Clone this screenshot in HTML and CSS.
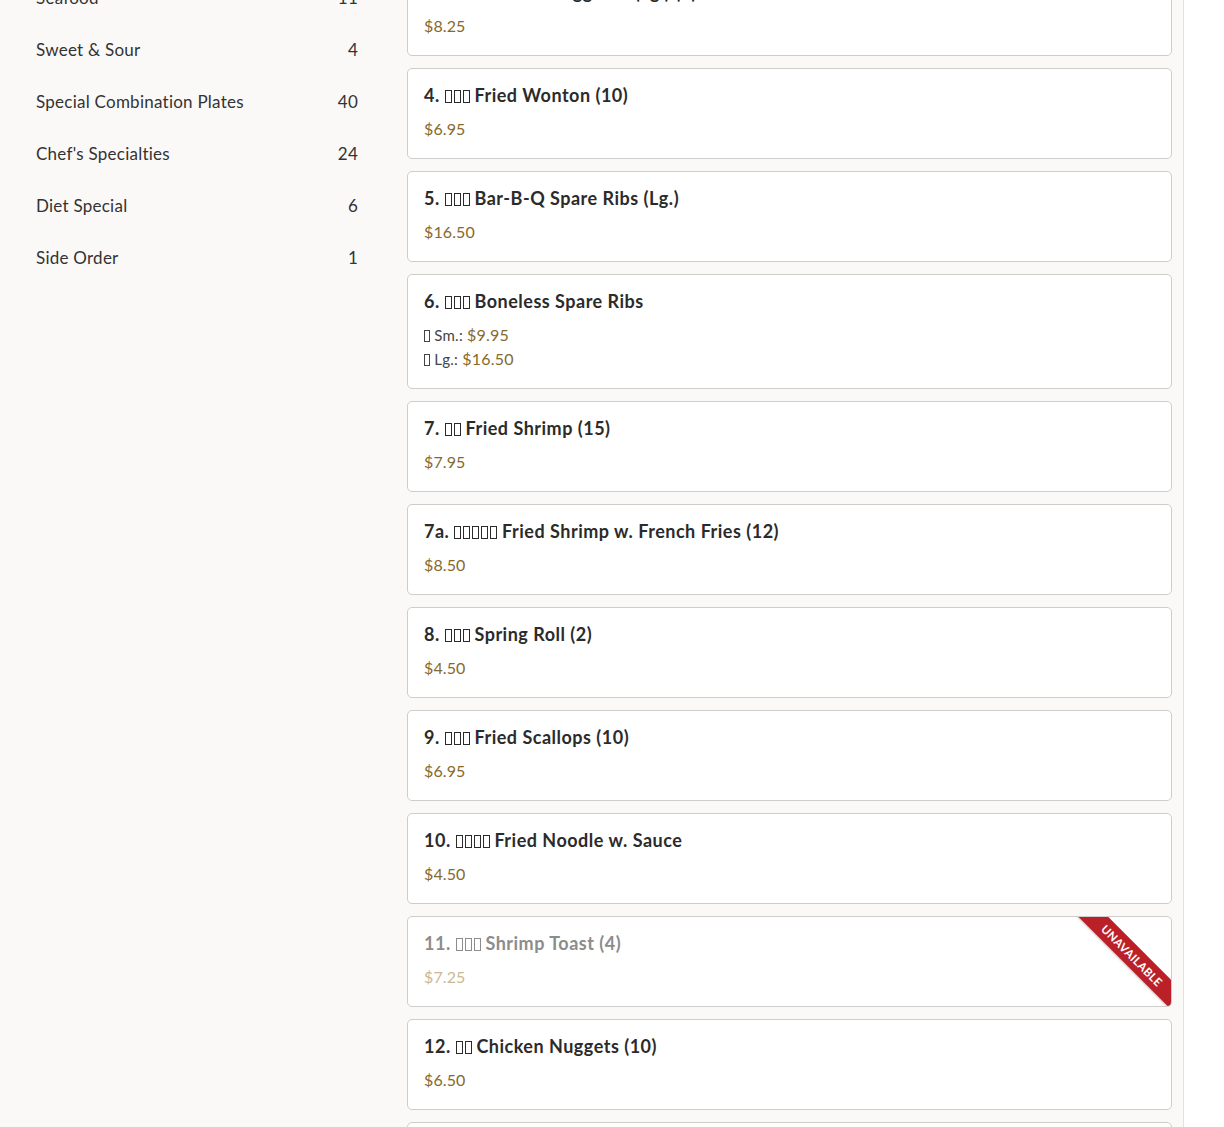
FILE: index.html
```html
<!DOCTYPE html>
<html lang="en">
<head>
<meta charset="utf-8">
<title>Menu</title>
<link rel="stylesheet" href="styles.css">
</head>
<body>
<div class="page">
  <aside class="sidebar">
    <ul class="cats">
      <li class="cat"><span>Seafood</span><span>11</span></li>
      <li class="cat"><span>Sweet &amp; Sour</span><span>4</span></li>
      <li class="cat"><span>Special Combination Plates</span><span>40</span></li>
      <li class="cat"><span>Chef's Specialties</span><span>24</span></li>
      <li class="cat"><span>Diet Special</span><span>6</span></li>
      <li class="cat"><span>Side Order</span><span>1</span></li>
    </ul>
  </aside>
  <main class="items">
    <div class="card">
      <div class="title">3. <span class="tofu"></span><span class="tofu"></span> Roast Pork Egg Roll (Lg.) (1)</div>
      <div class="price">$8.25</div>
    </div>
    <div class="card">
      <div class="title">4. <span class="tofu"></span><span class="tofu"></span><span class="tofu"></span> Fried Wonton (10)</div>
      <div class="price">$6.95</div>
    </div>
    <div class="card">
      <div class="title">5. <span class="tofu"></span><span class="tofu"></span><span class="tofu"></span> Bar-B-Q Spare Ribs (Lg.)</div>
      <div class="price">$16.50</div>
    </div>
    <div class="card">
      <div class="title">6. <span class="tofu"></span><span class="tofu"></span><span class="tofu"></span> Boneless Spare Ribs</div>
      <div class="opt"><span class="tofu small"></span> <span class="lbl">Sm.:</span> <span class="amt">$9.95</span></div>
      <div class="opt"><span class="tofu small"></span> <span class="lbl">Lg.:</span> <span class="amt">$16.50</span></div>
    </div>
    <div class="card">
      <div class="title">7. <span class="tofu"></span><span class="tofu"></span> Fried Shrimp (15)</div>
      <div class="price">$7.95</div>
    </div>
    <div class="card">
      <div class="title">7a. <span class="tofu"></span><span class="tofu"></span><span class="tofu"></span><span class="tofu"></span><span class="tofu"></span> Fried Shrimp w. French Fries (12)</div>
      <div class="price">$8.50</div>
    </div>
    <div class="card">
      <div class="title">8. <span class="tofu"></span><span class="tofu"></span><span class="tofu"></span> Spring Roll (2)</div>
      <div class="price">$4.50</div>
    </div>
    <div class="card">
      <div class="title">9. <span class="tofu"></span><span class="tofu"></span><span class="tofu"></span> Fried Scallops (10)</div>
      <div class="price">$6.95</div>
    </div>
    <div class="card">
      <div class="title">10. <span class="tofu"></span><span class="tofu"></span><span class="tofu"></span><span class="tofu"></span> Fried Noodle w. Sauce</div>
      <div class="price">$4.50</div>
    </div>
    <div class="card unavailable">
      <div class="title">11. <span class="tofu"></span><span class="tofu"></span><span class="tofu"></span> Shrimp Toast (4)</div>
      <div class="price">$7.25</div>
      <div class="ribbon-wrap"><div class="ribbon">Unavailable</div></div>
    </div>
    <div class="card">
      <div class="title">12. <span class="tofu"></span><span class="tofu"></span> Chicken Nuggets (10)</div>
      <div class="price">$6.50</div>
    </div>
    <div class="card">
      <div class="title">13. <span class="tofu"></span><span class="tofu"></span> Chicken Wings (6)</div>
      <div class="price">$6.50</div>
    </div>
  </main>
</div>
</body>
</html>
```

FILE: styles.css
```css
* { box-sizing: border-box; }
html, body { margin: 0; padding: 0; background: #ffffff; }
body {
  font-family: Lato, "Noto Sans", "DejaVu Sans", sans-serif;
  color: #2d2d2d;
  height: 1127px;
  overflow: hidden;
}
.page {
  width: 1184px;
  display: flex;
  background: #faf9f7;
  border-right: 1px solid #e4e2df;
  min-height: 1127px;
}
.sidebar {
  width: 395px;
  padding: 0 37px 0 36px;
  flex: none;
}
.cats {
  list-style: none;
  margin: -29px 0 0 0;
  padding: 0;
}
.cat {
  height: 52px;
  display: flex;
  justify-content: space-between;
  align-items: center;
  font-size: 17px;
  letter-spacing: 0.25px;
  color: #333333;
}
.items {
  flex: 1;
  padding: 0 11px 0 12px;
  margin-top: -35px;
}
.card {
  position: relative;
  background: #ffffff;
  border: 1px solid #cfcdca;
  border-radius: 5px;
  padding: 16px 16px 17px 16px;
  margin-bottom: 12px;
  overflow: hidden;
}
.title {
  font-size: 18px;
  font-weight: 700;
  line-height: 21px;
  letter-spacing: 0.5px;
  margin-bottom: 11px;
  color: #2b2b2b;
}
.price {
  font-size: 16px;
  line-height: 24px;
  letter-spacing: 0.1px;
  color: #86692b;
}
.opt {
  font-size: 15px;
  line-height: 24px;
  letter-spacing: 0.3px;
  color: #444444;
}
.title + .opt { margin-top: 1px; }
.opt .amt {
  font-size: 16px;
  letter-spacing: 0.2px;
  color: #86692b;
}
.tofu {
  display: inline-block;
  width: 7px;
  height: 13px;
  border: 1px solid currentColor;
  margin-right: 2px;
  vertical-align: -1px;
}
.tofu:last-of-type { margin-right: 0; }
.tofu.small { width: 6px; height: 12px; margin-right: 0; }
.unavailable .title { color: #8c8c8c; }
.unavailable .price { color: #cbb894; }
.ribbon-wrap {
  position: absolute;
  top: 0;
  right: 0;
  width: 100px;
  height: 100px;
  overflow: hidden;
  pointer-events: none;
}
.ribbon {
  position: absolute;
  width: 150px;
  height: 21px;
  left: -14px;
  top: 28px;
  transform: rotate(45deg);
  background: #bb2029;
  color: #ffffff;
  font-size: 11.5px;
  font-weight: 700;
  text-transform: uppercase;
  text-align: center;
  line-height: 21px;
  letter-spacing: 0.3px;
  box-shadow: 0 1px 2px rgba(0,0,0,0.25);
}
```
